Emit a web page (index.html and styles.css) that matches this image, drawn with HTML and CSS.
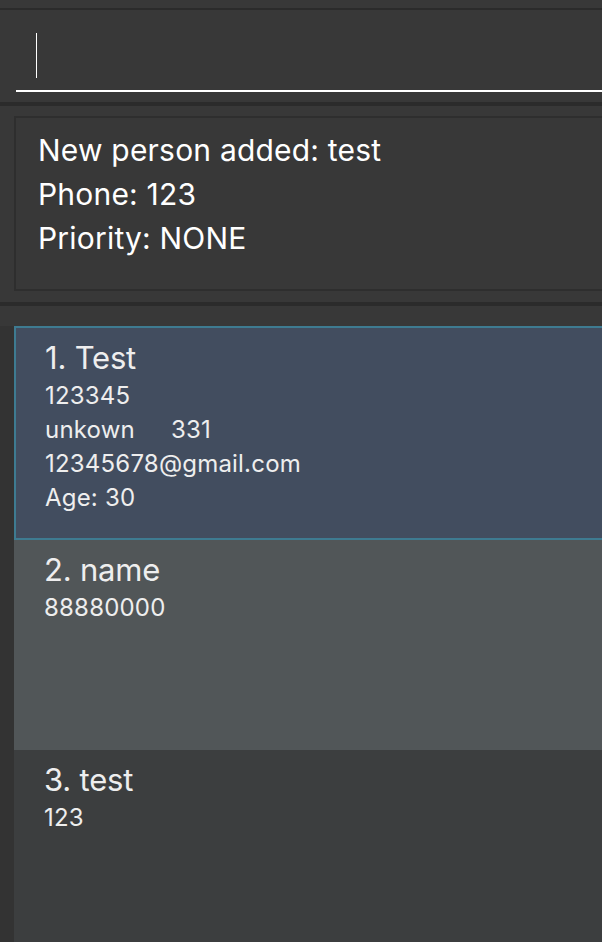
FILE: index.html
```html
<!DOCTYPE html>
<html>
<head>
<meta charset="utf-8">
<link rel="stylesheet" href="styles.css">
</head>
<body>
<div class="app">
  <div class="menu-bar"></div>
  <div class="command-pane">
    <div class="command-input"><span class="caret"></span></div>
  </div>
  <div class="divider"></div>
  <div class="result-pane">
    <div class="result-box">
      <div class="result-line">New person added: test</div>
      <div class="result-line">Phone: 123</div>
      <div class="result-line">Priority: NONE</div>
    </div>
  </div>
  <div class="divider"></div>
  <div class="list-pane">
    <div class="person-list">
      <div class="cell selected">
        <div class="name">1. Test</div>
        <div class="small">123345</div>
        <div class="small row"><span>unkown</span><span>331</span></div>
        <div class="small">12345678@gmail.com</div>
        <div class="small">Age: 30</div>
      </div>
      <div class="cell odd">
        <div class="name">2. name</div>
        <div class="small">88880000</div>
      </div>
      <div class="cell even">
        <div class="name">3. test</div>
        <div class="small">123</div>
      </div>
    </div>
  </div>
</div>
</body>
</html>
```

FILE: styles.css
```css
html, body {
  margin: 0;
  padding: 0;
  background: #383838;
  overflow: hidden;
}
body {
  width: 602px;
  height: 942px;
  font-family: Inter, "Noto Sans", sans-serif;
}
.app {
  width: 640px;
  display: flex;
  flex-direction: column;
}
.menu-bar {
  height: 8px;
  border-bottom: 2px solid #2b2b2b;
}
.command-pane {
  height: 92px;
  padding-left: 16px;
  box-sizing: border-box;
}
.command-input {
  border-bottom: 2px solid #ffffff;
  padding: 23px 0 0 20px;
  box-sizing: content-box;
  height: 57px;
  display: flex;
  align-items: flex-start;
}
.caret {
  width: 1px;
  height: 45px;
  background: #ffffff;
}
.divider {
  height: 4px;
  background: #2b2b2b;
}
.result-pane {
  padding: 10px 0 11px 14px;
}
.result-box {
  height: 175px;
  box-sizing: border-box;
  border: 2px solid #2e2e2e;
  padding: 10px 0 0 22px;
  color: #ffffff;
  font-size: 30px;
  line-height: 44px;
  letter-spacing: 0.2px;
}
.list-pane {
  padding-top: 20px;
  height: 640px;
}
.person-list {
  background: #333333;
  padding-left: 14px;
  height: 100%;
}
.cell {
  height: 210px;
  box-sizing: border-box;
  padding: 11px 0 0 30px;
  color: #eeeeee;
}
.cell.selected {
  background: #424d5f;
  border: 2px solid #3e7b91;
  height: 214px;
  padding-left: 29px;
}
.cell.odd {
  background: #515658;
}
.cell.even {
  background: #3c3e3f;
  height: 300px;
}
.name {
  font-size: 31px;
  line-height: 37px;
  letter-spacing: -0.2px;
  margin-bottom: 3px;
}
.small {
  font-size: 24px;
  line-height: 34px;
  letter-spacing: 0.2px;
}
.row {
  display: flex;
  gap: 36px;
}
```
